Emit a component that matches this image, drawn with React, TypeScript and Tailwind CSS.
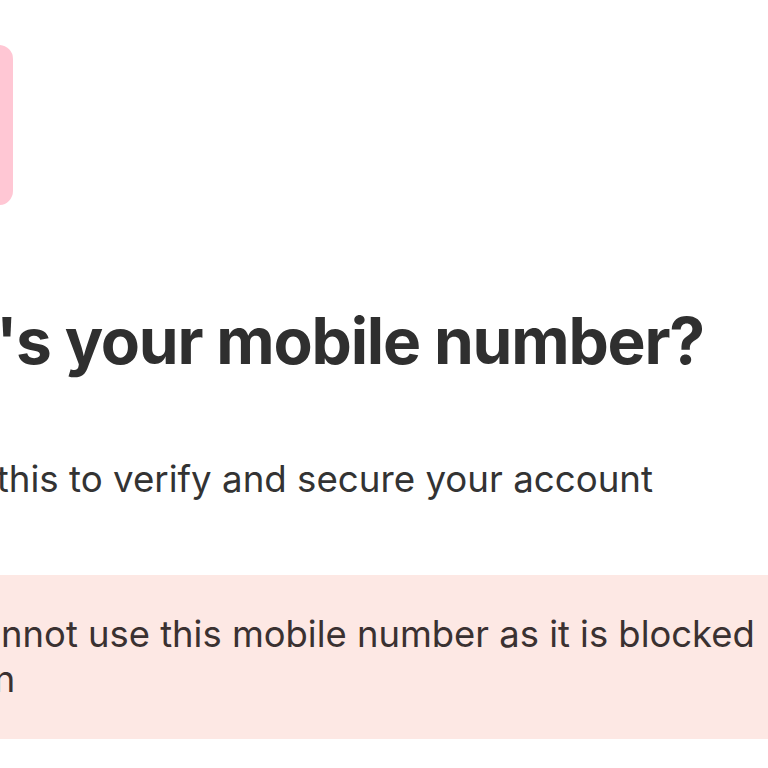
export default function App() {
  return (
    <div
      className="w-[768px] h-[768px] overflow-hidden bg-white text-[#2f2f2f]"
      style={{ fontFamily: "Inter, 'Noto Sans', sans-serif" }}
    >
      <div className="-ml-[140px] w-[1000px]">
        {/* logo card */}
        <div className="pt-[45px]">
          <div className="w-[153px] h-[160px] rounded-[14px] bg-[#ffc7d4]" />
        </div>

        {/* heading */}
        <h1 className="mt-[97px] -ml-[26px] text-[64px] leading-[78px] font-bold tracking-[-1.2px] whitespace-nowrap">
          What's your mobile number?
        </h1>

        {/* subtitle */}
        <p className="mt-[76px] -ml-[2px] text-[36.7px] leading-[46px] text-[#333333] whitespace-nowrap">
          We use this to verify and secure your account
        </p>

        {/* alert */}
        <div className="mt-[73px] bg-[#fde8e4] py-[37px] pl-[24px] pr-[28px] text-[36.4px] leading-[45px] text-[#3a3131]">
          <p className="whitespace-nowrap">You cannot use this mobile number as it is blocked</p>
          <p className="-ml-[26px] whitespace-nowrap">by admin</p>
        </div>
      </div>
    </div>
  );
}
